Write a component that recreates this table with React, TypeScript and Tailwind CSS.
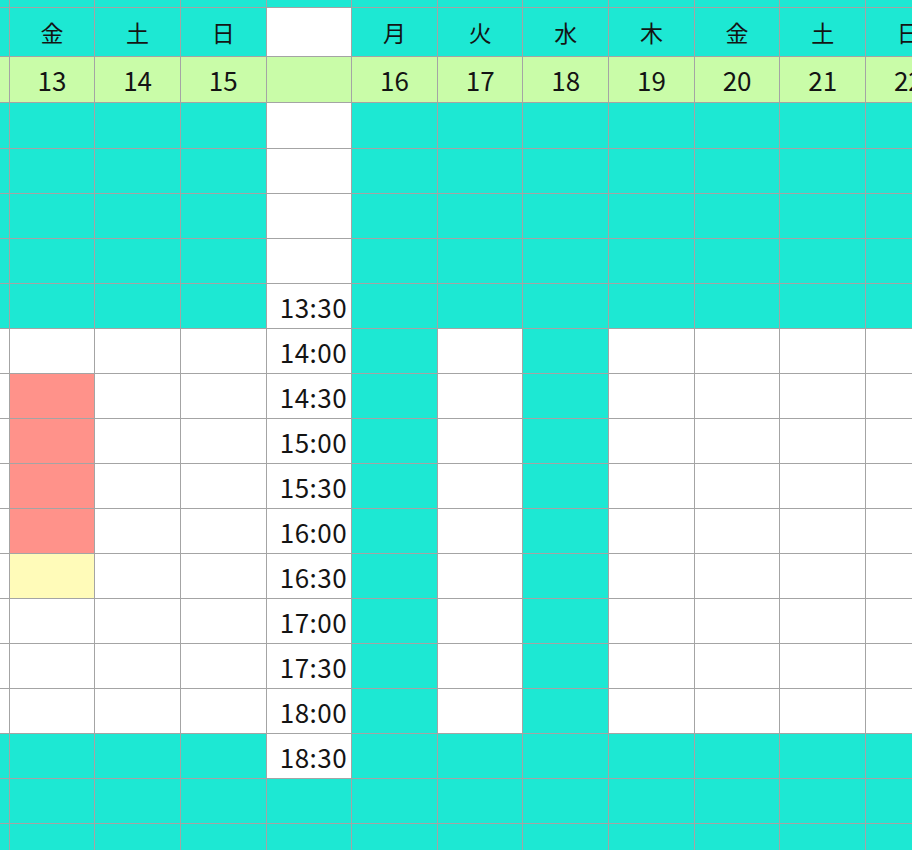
import React from "react";

type Kind = "t" | "w" | "g" | "p" | "y";

const bg: Record<Kind, string> = {
  t: "bg-[#1de8d3]",
  w: "bg-white",
  g: "bg-[#c9fca8]",
  p: "bg-[#ff928a]",
  y: "bg-[#fffbb9]",
};

// columns: 12(partial, off screen), 13, 14, 15, time, 16 .. 22, 23(off screen)
const leftDays = [
  { d: "", n: "" },
  { d: "金", n: "13" },
  { d: "土", n: "14" },
  { d: "日", n: "15" },
];
const rightDays = [
  { d: "月", n: "16" },
  { d: "火", n: "17" },
  { d: "水", n: "18" },
  { d: "木", n: "19" },
  { d: "金", n: "20" },
  { d: "土", n: "21" },
  { d: "日", n: "22" },
  { d: "", n: "" },
];

const times = ["", "", "", "", "13:30", "14:00", "14:30", "15:00", "15:30", "16:00", "16:30", "17:00", "17:30", "18:00", "18:30", "", ""];

// body rows: [left 4 cols], time, [right 8 cols]
function rowKinds(i: number): { left: Kind[]; time: Kind; right: Kind[] } {
  const allT = { left: ["t", "t", "t", "t"] as Kind[], time: "w" as Kind, right: Array(8).fill("t") as Kind[] };
  if (i <= 4 || i === 14) return allT;
  if (i >= 15) return { ...allT, time: "t" };
  let c13: Kind = "w";
  if (i >= 6 && i <= 9) c13 = "p";
  if (i === 10) c13 = "y";
  return {
    left: ["w", c13, "w", "w"],
    time: "w",
    right: ["t", "w", "t", "w", "w", "w", "w", "w"],
  };
}

function Cell({ kind, children, right }: { kind: Kind; children?: React.ReactNode; right?: boolean }) {
  return (
    <div className={`${bg[kind]} flex items-center ${right ? "justify-end pr-[4px]" : "justify-center"} overflow-hidden whitespace-nowrap`}>
      {children}
    </div>
  );
}

const row = "grid grid-cols-[repeat(13,84.65px)] gap-px";

export default function App() {
  return (
    <div className="w-[912px] h-[850px] overflow-hidden bg-white">
      <div
        className="-ml-[76px] -mt-[38px] grid gap-px bg-[#a4a4a4] w-max text-[#141414]"
        style={{
          fontFamily: '"Noto Sans CJK JP", "Noto Sans", sans-serif',
        }}
      >
        <div className={row}>
          {Array.from({ length: 13 }).map((_, i) => (
            <div key={i} className="h-[45px] bg-[#1de8d3]" />
          ))}
        </div>
        <div className={row}>
          {leftDays.map((d, i) => (
            <div key={i} className="h-[48px] bg-[#1de8d3] flex items-center justify-center text-[23px] overflow-hidden whitespace-nowrap">
              {d.d}
            </div>
          ))}
          <div className="h-[48px] bg-white" />
          {rightDays.map((d, i) => (
            <div key={i} className="h-[48px] bg-[#1de8d3] flex items-center justify-center text-[23px] overflow-hidden whitespace-nowrap">
              {d.d}
            </div>
          ))}
        </div>
        <div className={row}>
          {leftDays.map((d, i) => (
            <div key={i} className="h-[45px] bg-[#c9fca8] flex items-center justify-center text-[26px] overflow-hidden whitespace-nowrap">
              {d.n}
            </div>
          ))}
          <div className="h-[45px] bg-[#c9fca8]" />
          {rightDays.map((d, i) => (
            <div key={i} className="h-[45px] bg-[#c9fca8] flex items-center justify-center text-[26px] overflow-hidden whitespace-nowrap">
              {d.n}
            </div>
          ))}
        </div>
        {times.map((t, i) => {
          const k = rowKinds(i);
          return (
            <div key={i} className={`${row} ${i === 0 ? "h-[45px]" : "h-[44px]"}`}>
              {k.left.map((c, j) => (
                <Cell key={j} kind={c} />
              ))}
              <Cell kind={k.time} right>
                <span className="text-[26px] tracking-[0.5px]">{t}</span>
              </Cell>
              {k.right.map((c, j) => (
                <Cell key={j} kind={c} />
              ))}
            </div>
          );
        })}
      </div>
    </div>
  );
}
